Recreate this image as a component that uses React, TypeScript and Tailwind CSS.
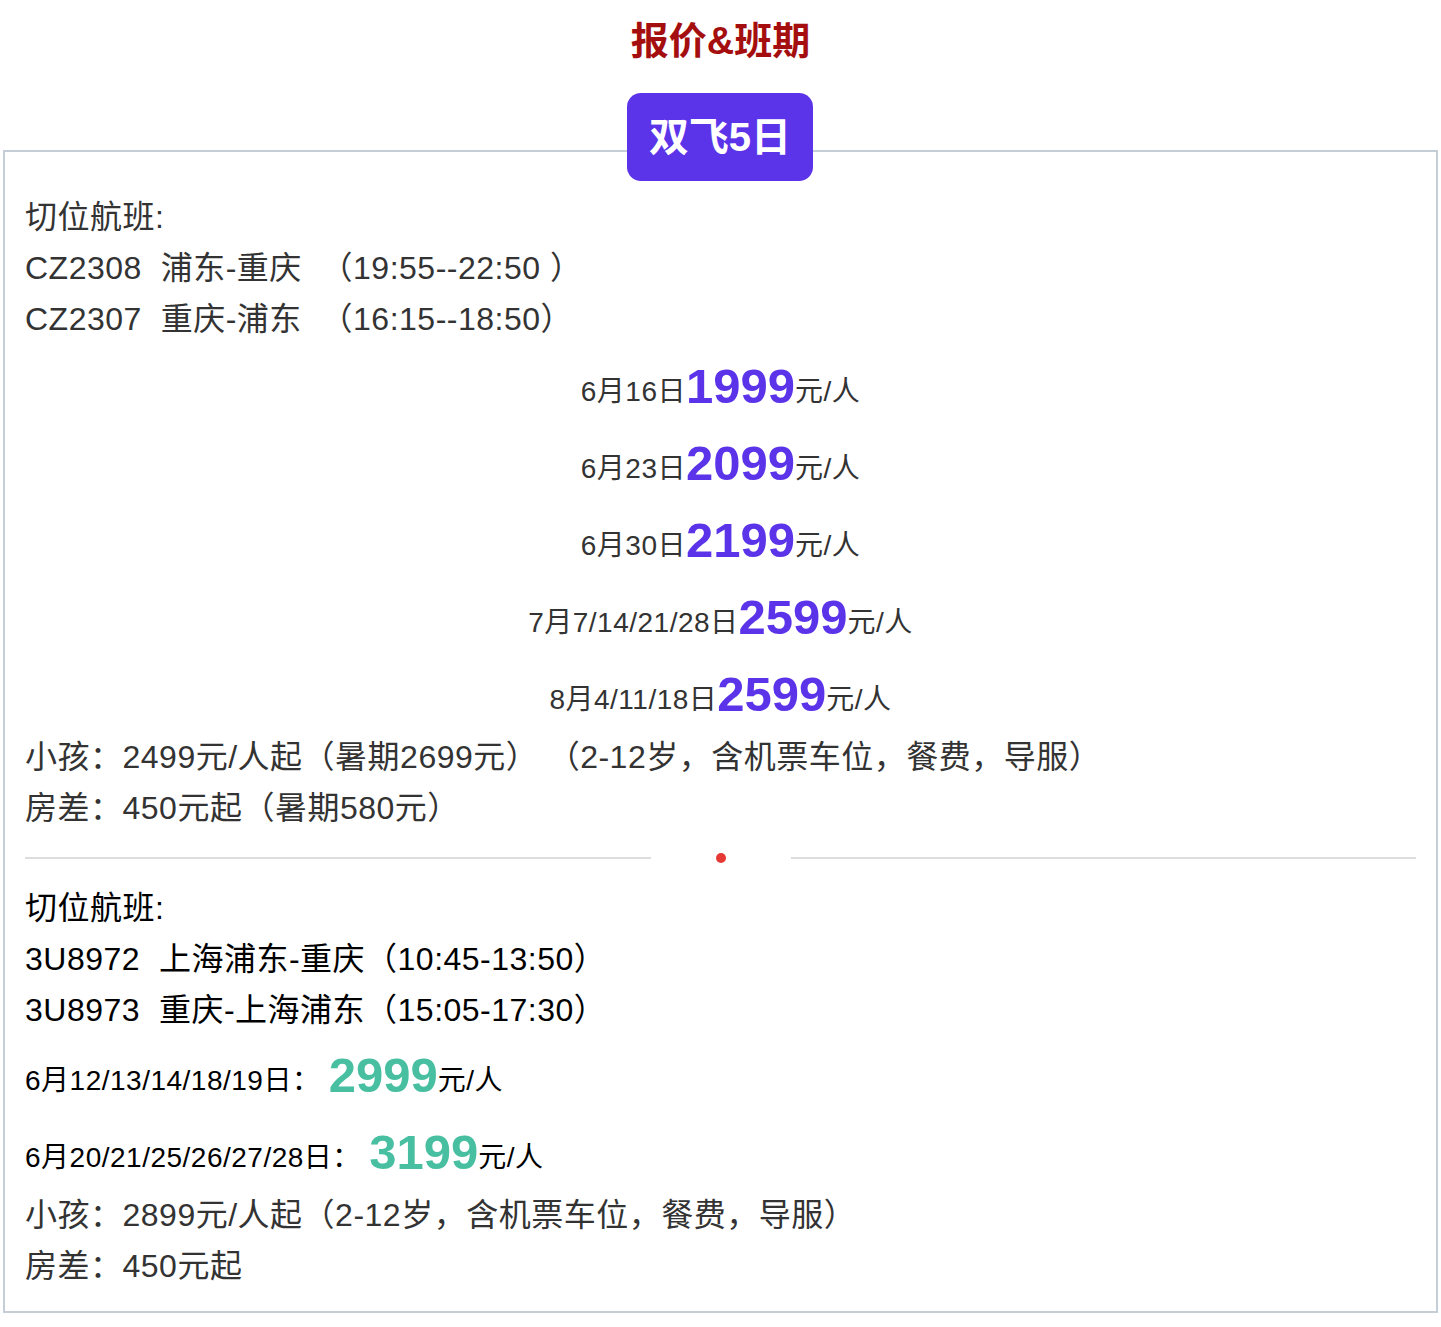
const F = { fontFamily: '"Liberation Sans", "Noto Sans CJK SC", sans-serif' };

const purple = [
  ["6月16日", "1999"],
  ["6月23日", "2099"],
  ["6月30日", "2199"],
  ["7月7/14/21/28日", "2599"],
  ["8月4/11/18日", "2599"],
];

export default function App() {
  return (
    <div className="bg-white w-[1441px] min-h-[1327px]" style={F}>
      <div className="pt-[16px] text-center text-[38px] font-bold leading-[50px] text-[#a50e0e]">报价&amp;班期</div>
      <div className="relative mt-[84px] mx-[3px] w-[1435px]">
        <div className="absolute left-[624px] -top-[57px] w-[186px] h-[88px] rounded-[14px] bg-[#5b34ea] text-white text-[40px] font-bold flex items-center justify-center">双飞5日</div>
        <div className="border-2 border-[#c5cdd6] pt-[40px] pb-[20px] px-[20px] h-[1163px]">
          <div className="text-[32px] tracking-[0.5px] leading-[51px] text-[#333]">
            <div>切位航班:</div>
            <div className="whitespace-pre">CZ2308  浦东-重庆  （19:55--22:50 ）</div>
            <div className="whitespace-pre">CZ2307  重庆-浦东  （16:15--18:50）</div>
          </div>
          <div className="mt-[8px] flex flex-col items-center">
            {purple.map(([d, p], i) => (
              <div key={i} className="h-[77px] flex items-center text-[28px] tracking-[0.5px] text-[#333]">
                <span>{d}</span>
                <span className="text-[49px] font-bold text-[#5b34ea] -mt-[10px] tracking-normal">{p}</span>
                <span>元/人</span>
              </div>
            ))}
          </div>
          <div className="-mt-[6px] text-[32px] tracking-[0.5px] leading-[51px] text-[#333]">
            <div className="whitespace-pre">小孩：2499元/人起（暑期2699元） （2-12岁，含机票车位，餐费，导服）</div>
            <div>房差：450元起（暑期580元）</div>
          </div>
          <div className="mt-[19px] flex items-center">
            <div className="flex-1 h-[2px] bg-[#ddd]" />
            <div className="w-[140px] flex justify-center"><div className="w-[10px] h-[10px] rounded-full bg-[#e53935]" /></div>
            <div className="flex-1 h-[2px] bg-[#ddd]" />
          </div>
          <div className="mt-[20px] text-[32px] tracking-[0.5px] leading-[51px] text-black">
            <div>切位航班:</div>
            <div className="whitespace-pre">3U8972  上海浦东-重庆（10:45-13:50）</div>
            <div className="whitespace-pre">3U8973  重庆-上海浦东（15:05-17:30）</div>
          </div>
          <div className="mt-[6px]">
            {[["6月12/13/14/18/19日： ", "2999"], ["6月20/21/25/26/27/28日： ", "3199"]].map(([d, p], i) => (
              <div key={i} className="h-[77px] flex items-center text-[28px] tracking-[0.5px] text-black">
                <span className="whitespace-pre">{d}</span>
                <span className="text-[49px] font-bold text-[#48bfa0] -mt-[10px] tracking-normal">{p}</span>
                <span>元/人</span>
              </div>
            ))}
          </div>
          <div className="-mt-[6px] text-[32px] tracking-[0.5px] leading-[51px] text-[#333]">
            <div>小孩：2899元/人起（2-12岁，含机票车位，餐费，导服）</div>
            <div>房差：450元起</div>
          </div>
        </div>
      </div>
    </div>
  );
}
